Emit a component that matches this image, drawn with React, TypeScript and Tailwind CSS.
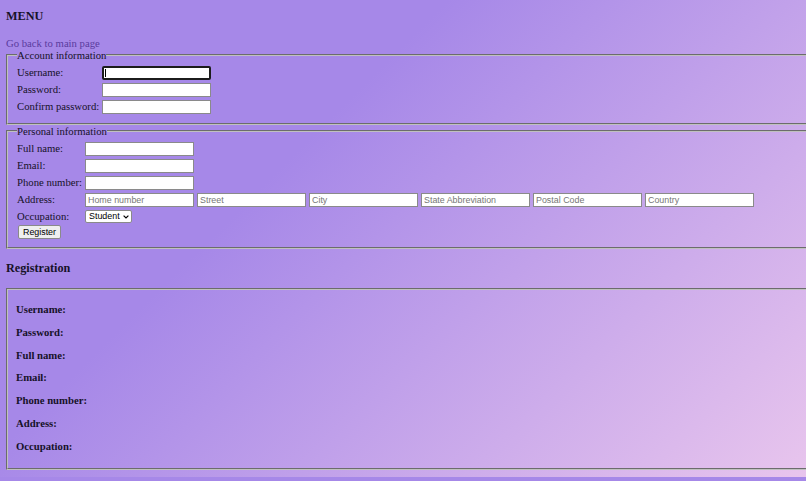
import React from "react";

const inputCls =
  "w-[109px] h-[14px] border border-[#8a8a8a] bg-white px-[2px] text-[8.9px] leading-[12px] font-['Liberation_Sans',Arial,sans-serif] text-black placeholder:text-[#767676] outline-none";

function Field({ placeholder }: { placeholder?: string }) {
  return <input type="text" className={inputCls} placeholder={placeholder} />;
}

function FocusedField() {
  return (
    <span className="relative inline-flex">
      <input
        type="text"
        className="w-[109px] h-[14px] border-2 border-[#1c1c1c] rounded-[2px] bg-white px-[2px] text-[8.9px] font-['Liberation_Sans',Arial,sans-serif] outline-none"
      />
      <span className="absolute left-[3px] top-[3px] h-[8px] w-[1px] bg-black" />
    </span>
  );
}

function Row({ label, w, children }: { label: string; w: string; children: React.ReactNode }) {
  return (
    <div className="flex items-center h-[17px]">
      <span className={w}>{label}</span>
      {children}
    </div>
  );
}

export default function App() {
  const fs =
    "mr-[-40px] border-2 [border-style:groove] border-[#c0c0c0] pl-[9px]";
  return (
    <div className="w-[806px] h-[481px] overflow-hidden bg-[#a688e8] font-['Liberation_Serif','Times_New_Roman',serif] text-[10.7px] text-[#161228]">
      <div className="h-[477px] px-[6px] pt-[9px] bg-[linear-gradient(135deg,#a688e8_35%,#e8c5ed_100%)]">
        <h3 className="text-[12.2px] font-bold leading-[14px]">MENU</h3>
        <a href="#" className="mt-[14px] block w-fit leading-[12px] text-[#5a3b9e]">
          Go back to main page
        </a>

        <fieldset className={`${fs} pt-[3px] pb-[8px]`}>
          <legend className="leading-[12px] px-0">Account information</legend>
          <Row label="Username:" w="w-[85px]">
            <FocusedField />
          </Row>
          <Row label="Password:" w="w-[85px]">
            <input type="password" className={inputCls} />
          </Row>
          <Row label="Confirm password:" w="w-[85px]">
            <input type="password" className={inputCls} />
          </Row>
        </fieldset>

        <fieldset className={`${fs} pt-[3px] pb-[7px]`}>
          <legend className="leading-[12px] px-0">Personal information</legend>
          <Row label="Full name:" w="w-[68px]">
            <Field />
          </Row>
          <Row label="Email:" w="w-[68px]">
            <Field />
          </Row>
          <Row label="Phone number:" w="w-[68px]">
            <Field />
          </Row>
          <Row label="Address:" w="w-[68px]">
            <div className="flex gap-[3px]">
              <Field placeholder="Home number" />
              <Field placeholder="Street" />
              <Field placeholder="City" />
              <Field placeholder="State Abbreviation" />
              <Field placeholder="Postal Code" />
              <Field placeholder="Country" />
            </div>
          </Row>
          <Row label="Occupation:" w="w-[68px]">
            <span className="relative inline-flex">
              <select className="appearance-none w-[47px] h-[13px] border border-[#8a8a8a] rounded-[2px] bg-white pl-[3px] pr-[10px] text-[8.9px] leading-[11px] font-['Liberation_Sans',Arial,sans-serif] text-black outline-none">
                <option>Student</option>
                <option>Employee</option>
                <option>Other</option>
              </select>
              <svg
                className="pointer-events-none absolute right-[3px] top-[4.5px]"
                width="6"
                height="4"
                viewBox="0 0 6 4"
              >
                <path d="M0.6 0.6L3 3L5.4 0.6" fill="none" stroke="#000" strokeWidth="1.2" />
              </svg>
            </span>
          </Row>
          <div className="h-[15px] flex items-start">
            <button
              type="button"
              className="ml-[1px] w-[43px] h-[14px] border border-[#8a8a8a] rounded-[2px] bg-[#efefef] text-[8.9px] leading-[12px] font-['Liberation_Sans',Arial,sans-serif] text-black"
            >
              Register
            </button>
          </div>
        </fieldset>

        <h3 className="mt-[12px] text-[12.2px] font-bold leading-[14px]">Registration</h3>

        <fieldset className="mt-[13px] mr-[-40px] border-2 [border-style:groove] border-[#c0c0c0] pl-[8px] pt-[13px] pb-[16px]">
          <div className="flex flex-col gap-[10.8px] font-bold leading-[12px]">
            <div>Username:</div>
            <div>Password:</div>
            <div>Full name:</div>
            <div>Email:</div>
            <div>Phone number:</div>
            <div>Address:</div>
            <div>Occupation:</div>
          </div>
        </fieldset>
      </div>
    </div>
  );
}
